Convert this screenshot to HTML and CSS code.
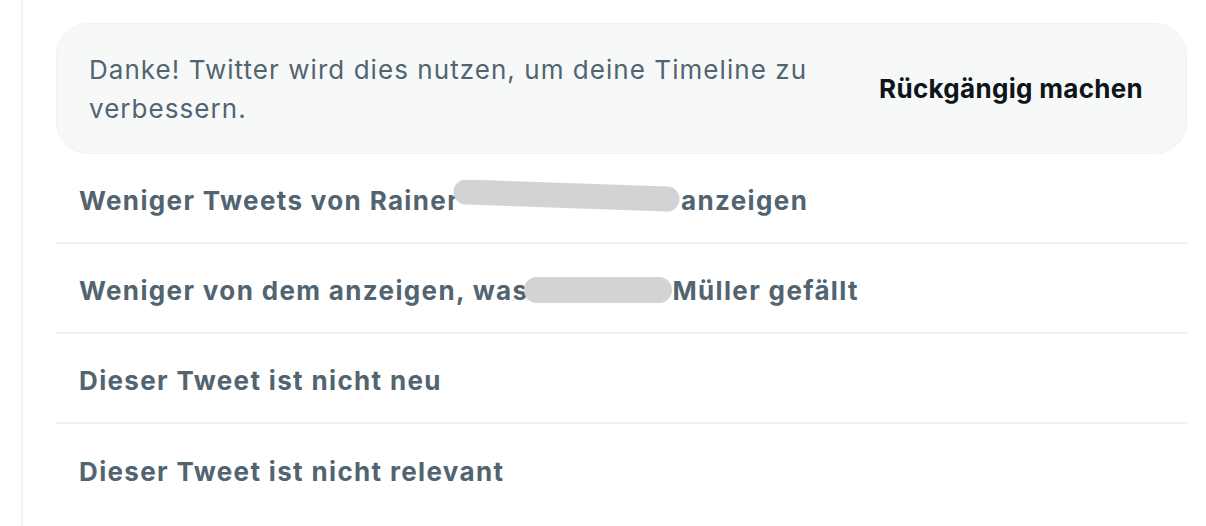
FILE: index.html
```html
<!DOCTYPE html>
<html lang="de">
<head>
<meta charset="utf-8">
<link rel="stylesheet" href="styles.css">
</head>
<body>
<div class="column">
  <div class="panel">
    <div class="notice">
      <p class="notice-text">Danke! Twitter wird dies nutzen, um deine Timeline zu verbessern.</p>
      <span class="undo">Rückgängig machen</span>
    </div>
    <ul class="options">
      <li class="option">Weniger Tweets von Rainer<svg class="blob blob-1" width="230" height="34" viewBox="0 0 230 34"><path d="M15 12 L216 19" stroke="#d1d3d4" stroke-width="25" stroke-linecap="round" fill="none"/></svg>anzeigen</li>
      <li class="option">Weniger von dem anzeigen, was<span class="blob blob-2"></span>Müller gefällt</li>
      <li class="option">Dieser Tweet ist nicht neu</li>
      <li class="option">Dieser Tweet ist nicht relevant</li>
    </ul>
  </div>
</div>
</body>
</html>
```
FILE: styles.css
```css
html, body {
  margin: 0;
  padding: 0;
  background: #ffffff;
}
body {
  font-family: Inter, "Noto Sans", "Liberation Sans", sans-serif;
  height: 526px;
  overflow: hidden;
}
.column {
  margin-left: 21px;
  border-left: 2px solid #eff3f4;
  height: 526px;
  padding: 23px 19px 0 33px;
  box-sizing: border-box;
}
.panel {
  display: flex;
  flex-direction: column;
}
.notice {
  display: flex;
  align-items: center;
  justify-content: space-between;
  background: #f7f9f9;
  border: 1px solid #eff3f4;
  border-radius: 32px;
  height: 131px;
  box-sizing: border-box;
  padding: 0 43px 0 32px;
}
.notice-text {
  margin: 0;
  width: 750px;
  font-size: 26px;
  letter-spacing: 1.05px;
  line-height: 39px;
  color: #536471;
  font-weight: 400;
}
.undo {
  font-size: 26px;
  letter-spacing: 0.3px;
  font-weight: 700;
  color: #0f1419;
  white-space: nowrap;
}
.options {
  list-style: none;
  margin: 0;
  padding: 0;
}
.option {
  height: 90px;
  box-sizing: border-box;
  border-bottom: 2px solid #eff3f4;
  display: flex;
  align-items: center;
  padding: 4px 0 0 23px;
  font-size: 26px;
  letter-spacing: 1.35px;
  font-weight: 700;
  color: #536471;
  white-space: nowrap;
}
.option:last-child {
  border-bottom: none;
}
.blob {
  display: inline-block;
  flex: none;
}
.blob-1 {
  margin: -6px 0 0 -8px;
}
.blob-2 {
  width: 148px;
  height: 26px;
  border-radius: 13px;
  background: #d1d3d4;
  margin: 0 0 0 -4px;
}
```
